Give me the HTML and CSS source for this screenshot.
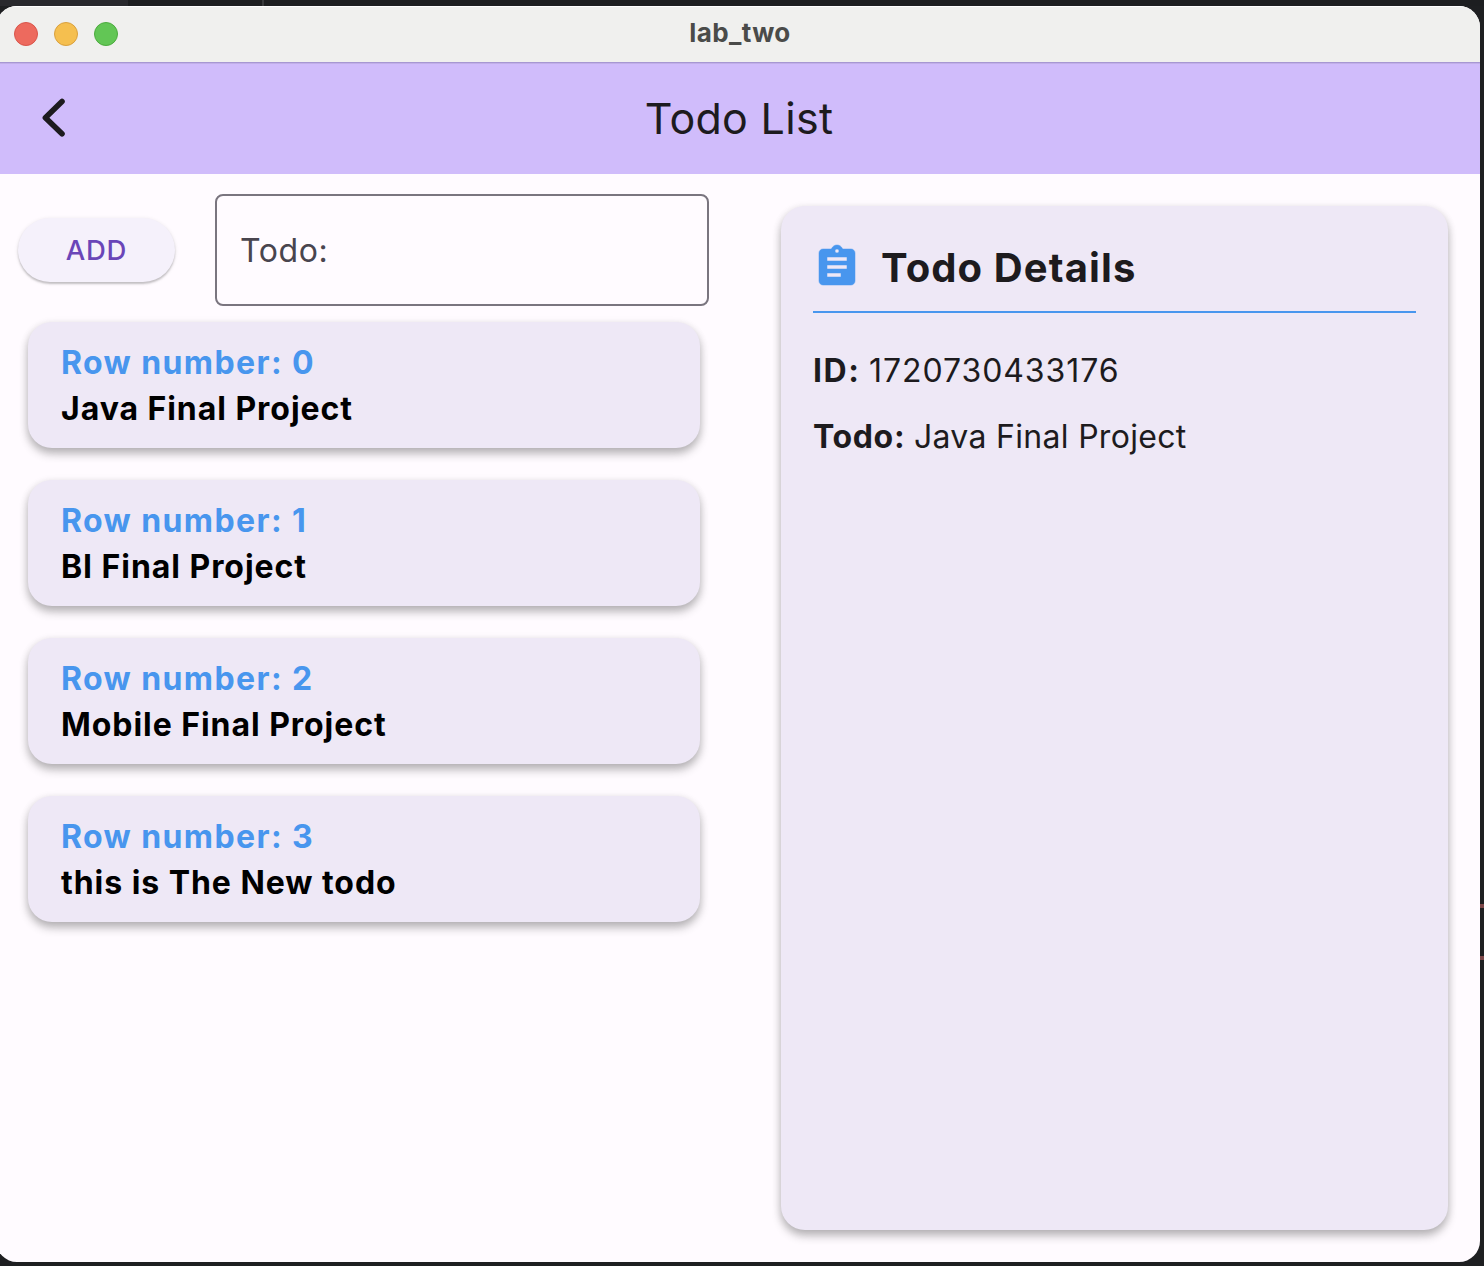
FILE: index.html
```html
<!DOCTYPE html>
<html lang="en">
<head>
<meta charset="utf-8">
<title>lab_two</title>
<link rel="stylesheet" href="styles.css">
</head>
<body>
<div class="edge-mark edge-mark-one"></div>
<div class="edge-mark edge-mark-two"></div>
<div class="window">
  <header class="titlebar">
    <div class="lights"><span class="light red"></span><span class="light yellow"></span><span class="light green"></span></div>
    <div class="window-title">lab_two</div>
  </header>
  <nav class="appbar">
    <svg class="back" width="48" height="48" viewBox="0 0 48 48"><path d="M32 7.500 L15.400 23.700 L32 39.800" fill="none" stroke="#1d1b1e" stroke-width="5.600" stroke-linecap="round" stroke-linejoin="round"/></svg>
    <h1 class="page-title">Todo List</h1>
  </nav>
  <main class="content">
    <section class="list-pane">
      <div class="entry">
        <button class="add">ADD</button>
        <div class="field">Todo:</div>
      </div>
      <ul class="todos">
        <li class="card"><span class="row-number">Row number: 0</span><span class="name">Java Final Project</span></li>
        <li class="card"><span class="row-number">Row number: 1</span><span class="name">BI Final Project</span></li>
        <li class="card"><span class="row-number">Row number: 2</span><span class="name">Mobile Final Project</span></li>
        <li class="card"><span class="row-number">Row number: 3</span><span class="name">this is The New todo</span></li>
      </ul>
    </section>
    <section class="details">
      <div class="details-head">
        <svg width="48" height="48" viewBox="0 0 24 24"><path fill="#4896ee" stroke="#4896ee" stroke-width=".25" d="M19 3h-4.180C14.400 1.840 13.300 1 12 1c-1.300 0-2.400.840-2.820 2H5c-1.100 0-2 .9-2 2v14c0 1.100.9 2 2 2h14c1.100 0 2-.9 2-2V5c0-1.100-.9-2-2-2zm-7 0c.55 0 1 .45 1 1s-.45 1-1 1-1-.45-1-1 .45-1 1-1zm2 14H7v-2h7v2zm3-4H7v-2h10v2zm0-4H7V7h10v2z"/></svg>
        <h2 class="details-title">Todo Details</h2>
      </div>
      <p class="detail"><b class="label id-label">ID:</b><span class="id-value">1720730433176</span></p>
      <p class="detail"><b class="label">Todo:</b><span class="todo-value">Java Final Project</span></p>
    </section>
  </main>
</div>
</body>
</html>
```

FILE: styles.css
```css
* { box-sizing: border-box; margin: 0; padding: 0; }

body {
  width: 1484px;
  height: 1266px;
  overflow: hidden;
  position: relative;
  padding-top: 6px;
  font-family: Inter, "Liberation Sans", sans-serif;
  color: #1d1b1e;
  background: linear-gradient(90deg, #29292d 0 128px, #1d1e20 128px 262px, #38393b 262px 264px, #1d1e20 264px) top / 100% 6px no-repeat, #1e1f21;
}

.edge-mark { position: absolute; right: 0; width: 4px; height: 4px; background: #7d4748; }
.edge-mark-one { top: 904px; }
.edge-mark-two { top: 956px; }

.window {
  display: flex;
  flex-direction: column;
  width: 1484px;
  height: 1256px;
  margin-left: -4px;
  padding-left: 4px;
  border-radius: 21px;
  overflow: hidden;
  background: #fffbff;
}

.titlebar {
  display: grid;
  grid-template-columns: 1fr auto 1fr;
  align-items: center;
  height: 56px;
  margin-left: -4px;
  padding-left: 4px;
  background: #f0f0ee;
  box-shadow: inset 0 1px #fff;
}
.lights { display: flex; gap: 16px; padding-left: 14px; }
.light { width: 24px; height: 24px; border-radius: 50%; border: 1px solid; }
.red { background: #ed6a5e; border-color: #d9554b; }
.yellow { background: #f5bf4f; border-color: #d9a03e; }
.green { background: #62c655; border-color: #4cab3e; }
.window-title {
  font-size: 26px;
  font-weight: 700;
  line-height: 32px;
  letter-spacing: 0.4px;
  color: #4a4b49;
  padding-bottom: 2px;
}

.appbar {
  display: grid;
  grid-template-columns: 1fr auto 1fr;
  align-items: center;
  height: 112px;
  margin-left: -4px;
  padding: 0 32px 2px 34px;
  background: #d0bcfb;
  border-top: 1px solid #a797d2;
  box-shadow: inset 0 1px #c1afe8;
}
.back { display: block; }
.page-title { font-size: 43px; font-weight: 400; line-height: 56px; letter-spacing: 0.3px; }

.content { flex: 1; display: flex; justify-content: space-between; padding: 20px 32px 32px 18px; }

.list-pane { width: 691px; }
.entry { display: flex; align-items: center; justify-content: space-between; }
.add {
  width: 157px;
  height: 64px;
  padding-top: 1px;
  border: 0;
  border-radius: 32px;
  background: #f5f1fb;
  color: #6a46b8;
  font: 500 27.5px/63px Inter, "Liberation Sans", sans-serif;
  letter-spacing: 0.7px;
  box-shadow: 0 2px 2px rgba(0, 0, 0, .19), 0 1px 4px rgba(0, 0, 0, .10);
}
.field {
  width: 494px;
  height: 112px;
  padding-left: 23px;
  border: 2px solid #7a757f;
  border-radius: 8px;
  color: #49454e;
  font-size: 32px;
  line-height: 110px;
  letter-spacing: 0.6px;
}

.todos { display: flex; flex-direction: column; gap: 32px; margin: 16px 9px 0 10px; list-style: none; }
.card {
  display: flex;
  flex-direction: column;
  height: 126px;
  padding: 18px 33px;
  border-radius: 24px;
  background: #eee8f6;
  font-size: 32px;
  font-weight: 700;
  line-height: 46px;
  letter-spacing: 0.95px;
  color: #000;
  box-shadow: 0 6px 10px rgba(0, 0, 0, .24), 0 2px 8px rgba(0, 0, 0, .11);
}
.row-number { color: #4896ee; letter-spacing: 1.4px; }

.details {
  width: 667px;
  margin-top: 12px;
  padding: 32px;
  border-radius: 24px;
  background: #eee8f6;
  box-shadow: 0 6px 10px rgba(0, 0, 0, .24), 0 2px 8px rgba(0, 0, 0, .11);
}
.details-head {
  display: flex;
  gap: 20px;
  height: 75px;
  margin-bottom: 35px;
  border-bottom: 2px solid #4896ee;
}
.details-head svg { margin-top: 5px; }
.details-title { font-size: 40px; font-weight: 700; line-height: 60px; letter-spacing: 1.1px; }
.detail { display: flex; margin-bottom: 20px; font-size: 32px; line-height: 46px; }
.label { width: 101px; letter-spacing: 0.65px; }
.id-label { width: 56px; letter-spacing: 1.6px; }
.id-value { letter-spacing: .93px; }
.todo-value { letter-spacing: .3px; }
```
